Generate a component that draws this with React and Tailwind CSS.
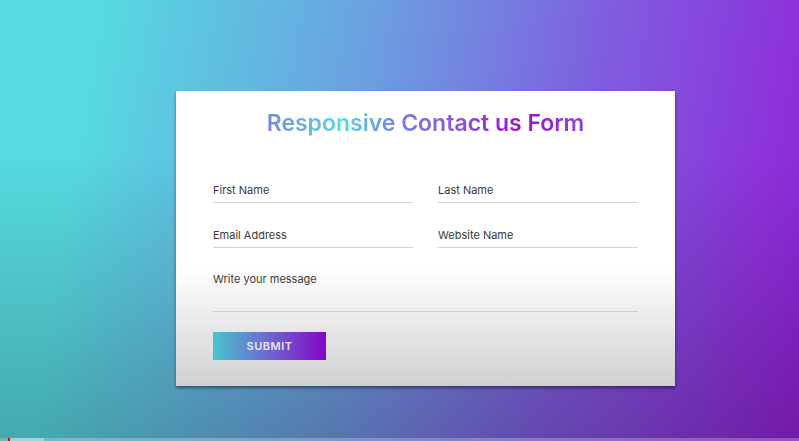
const Field = ({ label, className = '' }) => (
  <div className={`flex flex-col ${className}`}>
    <label className="text-[11px] text-[#3a3a3a] leading-none pb-[6px]">{label}</label>
    <div className="h-px bg-[#d4d4d4]" />
  </div>
);

export default function App() {
  return (
    <div
      className="w-[799px] h-[441px] overflow-hidden flex flex-col bg-[linear-gradient(to_bottom,rgba(0,0,0,0)_35%,rgba(0,0,0,0.22)),linear-gradient(100deg,#56d9e0_12%,#6c9ce0_45%,#7f5ddf_70%,#9220d8_100%)]"
      style={{ fontFamily: 'Inter, "Noto Sans", sans-serif' }}
    >
      <div className="flex-1 pt-[91px] pl-[176px]">
        <div className="w-[499px] h-[295px] bg-[linear-gradient(to_bottom,#ffffff_60%,#d0d0d0)] shadow-[0_2px_3px_rgba(0,0,0,0.45)] px-[37px] pt-[18px]">
          <h1 className="text-center text-[23px] font-semibold leading-[28px] bg-[linear-gradient(90deg,#8468d4_0%,#7a7cd6_10%,#5cd8e6_30%,#6d8ade_42%,#8a52d8_58%,#9a12cf_72%,#8f3cd8_85%,#8a50d8_100%)] bg-clip-text text-transparent">
            Responsive Contact us Form
          </h1>
          <div className="grid grid-cols-2 gap-x-[25px] mt-[48px]">
            <Field label="First Name" />
            <Field label="Last Name" />
            <Field label="Email Address" className="mt-[27px]" />
            <Field label="Website Name" className="mt-[27px]" />
          </div>
          <div className="flex flex-col mt-[26px]">
            <label className="text-[11px] text-[#3a3a3a] leading-none">Write your message</label>
            <div className="h-[26px]" />
            <div className="h-px bg-[#cfcfcf]" />
          </div>
          <button className="mt-[20px] w-[113px] h-[28px] bg-[linear-gradient(90deg,#48c4cc_0%,#6a6fd0_45%,#8506c8_100%)] text-[11px] font-semibold tracking-[0.5px] text-[#e6e6f2]">
            SUBMIT
          </button>
        </div>
      </div>
      <div className="h-[3px] flex">
        <div className="w-[8px] bg-white/20" />
        <div className="w-[2px] bg-red-600" />
        <div className="w-[34px] bg-white/50" />
        <div className="flex-1 bg-white/25" />
      </div>
    </div>
  );
}
